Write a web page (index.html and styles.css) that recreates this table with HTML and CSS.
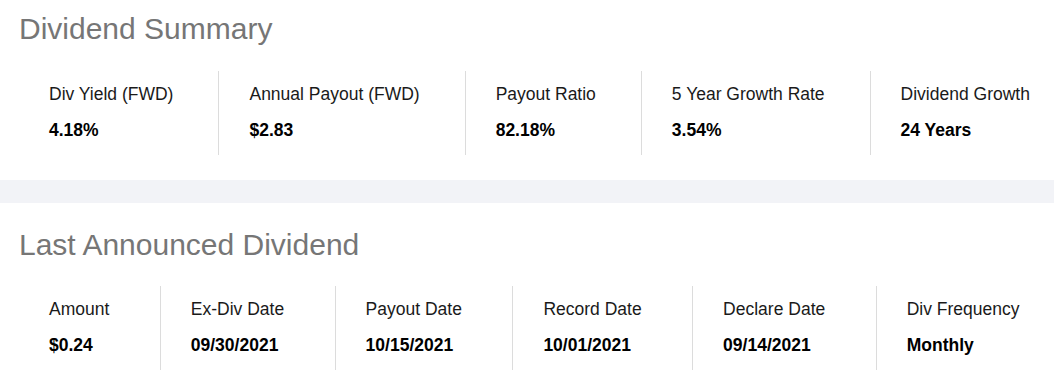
FILE: index.html
```html
<!DOCTYPE html>
<html lang="en">
<head>
<meta charset="utf-8">
<title>Dividends</title>
<link rel="stylesheet" href="styles.css">
</head>
<body>
  <section class="section section-first">
    <h2 class="title">Dividend Summary</h2>
    <div class="stats">
      <div class="stat"><div class="label">Div Yield (FWD)</div><div class="value">4.18%</div></div>
      <div class="stat"><div class="label">Annual Payout (FWD)</div><div class="value">$2.83</div></div>
      <div class="stat"><div class="label">Payout Ratio</div><div class="value">82.18%</div></div>
      <div class="stat"><div class="label">5 Year Growth Rate</div><div class="value">3.54%</div></div>
      <div class="stat"><div class="label">Dividend Growth</div><div class="value">24 Years</div></div>
    </div>
  </section>
  <div class="band"></div>
  <section class="section section-second">
    <h2 class="title">Last Announced Dividend</h2>
    <div class="stats">
      <div class="stat"><div class="label">Amount</div><div class="value">$0.24</div></div>
      <div class="stat"><div class="label">Ex-Div Date</div><div class="value">09/30/2021</div></div>
      <div class="stat"><div class="label">Payout Date</div><div class="value">10/15/2021</div></div>
      <div class="stat"><div class="label">Record Date</div><div class="value">10/01/2021</div></div>
      <div class="stat"><div class="label">Declare Date</div><div class="value">09/14/2021</div></div>
      <div class="stat"><div class="label">Div Frequency</div><div class="value">Monthly</div></div>
    </div>
  </section>
</body>
</html>
```
FILE: styles.css
```css
html, body {
  margin: 0;
  padding: 0;
  background: #ffffff;
  overflow: hidden;
}
body {
  font-family: "Liberation Sans", Arial, sans-serif;
  color: #1a1a1a;
  width: 1054px;
}
.section {
  padding-left: 19px;
}
.section-first {
  padding-top: 11px;
  padding-bottom: 25px;
}
.section-second {
  padding-top: 24px;
  padding-bottom: 13px;
}
.title {
  margin: 0 0 24px 0;
  font-size: 30px;
  line-height: 36px;
  font-weight: 400;
  color: #767676;
}
.section-second .title {
  margin-bottom: 23px;
}
.stats {
  display: flex;
  width: 1056px;
}
.section-second .stats {
  width: 1051px;
}
.stat {
  flex: 1 1 auto;
  padding: 13px 0 15px 30px;
  white-space: nowrap;
  border-left: 1px solid #dcdcdc;
}
.stat:first-child {
  border-left: none;
}
.label {
  font-size: 17.5px;
  line-height: 20px;
  color: #1a1a1a;
}
.value {
  margin-top: 16px;
  font-size: 17.5px;
  line-height: 20px;
  font-weight: 700;
  color: #000000;
}
.band {
  height: 23px;
  background: #f2f3f7;
}
```
